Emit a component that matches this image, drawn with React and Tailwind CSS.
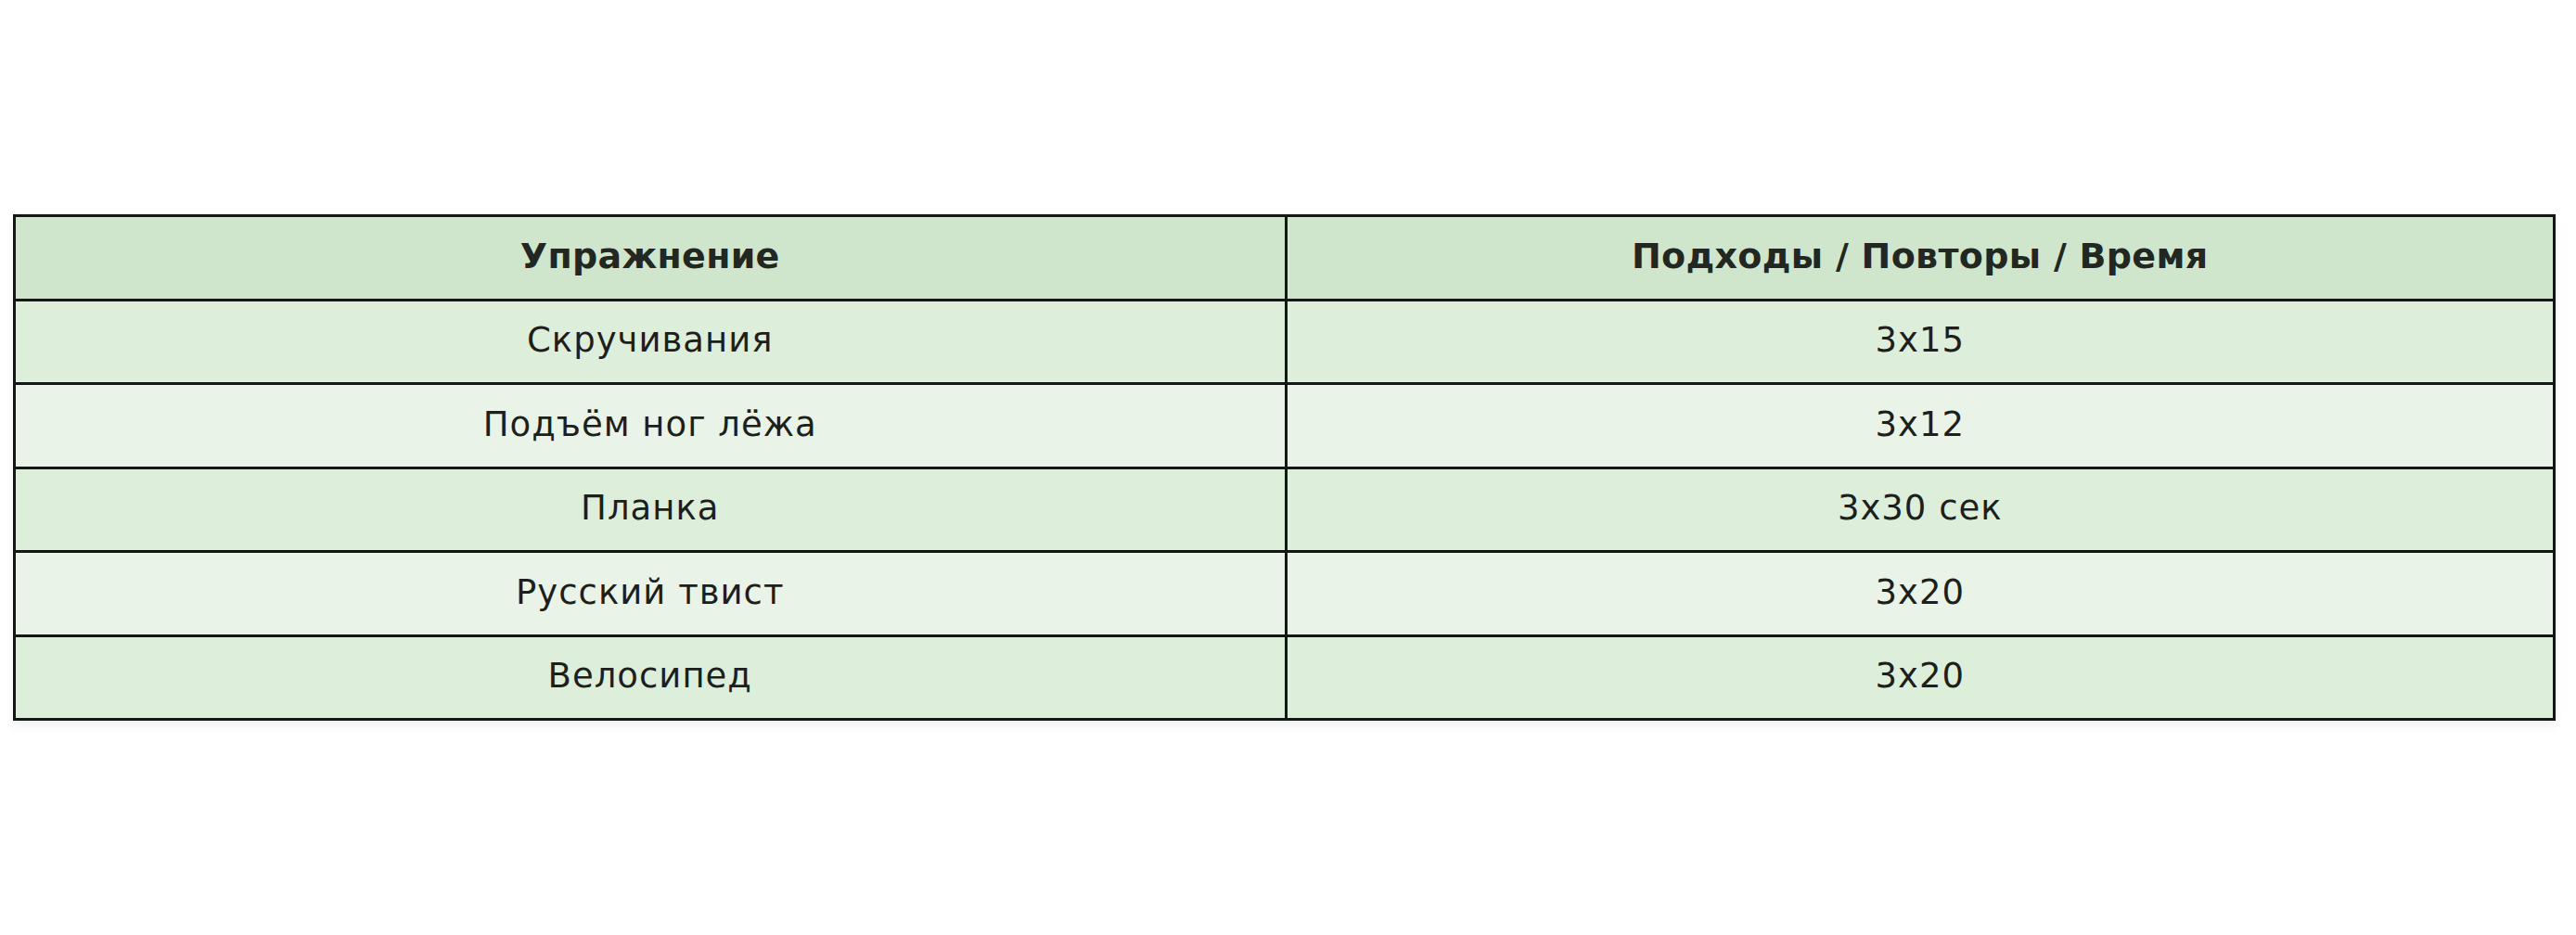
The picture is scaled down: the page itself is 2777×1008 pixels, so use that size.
const rows = [
  ["Скручивания", "3x15"],
  ["Подъём ног лёжа", "3x12"],
  ["Планка", "3x30 сек"],
  ["Русский твист", "3x20"],
  ["Велосипед", "3x20"],
];

const App = () => {
  return (
    <div className="w-[2777px] h-[1008px] bg-white pt-[231px] pl-[14px] font-['DejaVu_Sans',sans-serif]">
      <div className="w-[2741px] border-[3px] border-[#141814] shadow-[0_6px_10px_rgba(0,0,0,0.06)]">
        <div className="grid grid-cols-2 h-[87.5px] bg-[#cfe6cc] text-[#222722] text-[38px] font-bold tracking-[0.3px]">
          <div className="flex items-center justify-center pb-[3px]">Упражнение</div>
          <div className="flex items-center justify-center pb-[3px] border-l-[3px] border-[#141814]">
            Подходы / Повторы / Время
          </div>
        </div>
        {rows.map((r, i) => (
          <div
            key={i}
            className={
              "grid grid-cols-2 h-[90.5px] border-t-[3px] border-[#141814] text-[37px] tracking-[1px] text-[#1c1f1c] " +
              (i % 2 === 0 ? "bg-[#ddeedb]" : "bg-[#e9f3e7]")
            }
          >
            <div className="flex items-center justify-center pb-[3px]">{r[0]}</div>
            <div className="flex items-center justify-center pb-[3px] border-l-[3px] border-[#141814]">{r[1]}</div>
          </div>
        ))}
      </div>
    </div>
  );
};

export default App;
